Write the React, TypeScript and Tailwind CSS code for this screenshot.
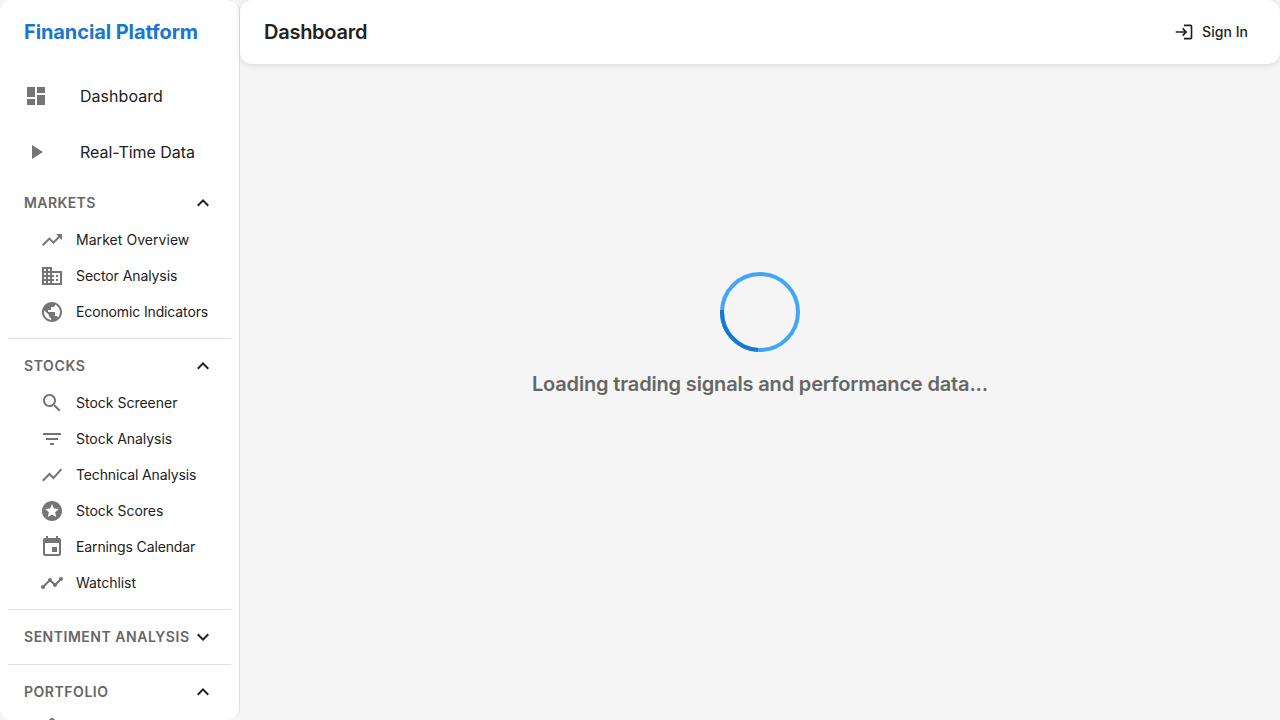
import type { ReactNode } from "react";

const ICONS = {
  dashboard: "M3 13h8V3H3v10zm0 8h8v-6H3v6zm10 0h8V11h-8v10zm0-18v6h8V3h-8z",
  play: "M8 5v14l11-7z",
  trendingUp: "m16 6 2.29 2.29-4.88 4.88-4-4L2 16.59 3.41 18l6-6 4 4 6.3-6.29L22 12V6z",
  business:
    "M12 7V3H2v18h20V7H12zM6 19H4v-2h2v2zm0-4H4v-2h2v2zm0-4H4V9h2v2zm0-4H4V5h2v2zm4 12H8v-2h2v2zm0-4H8v-2h2v2zm0-4H8V9h2v2zm0-4H8V5h2v2zm10 12h-8v-2h2v-2h-2v-2h2v-2h-2V9h8v10zm-2-8h-2v2h2v-2zm0 4h-2v2h2v-2z",
  globe:
    "M12 2C6.48 2 2 6.48 2 12s4.48 10 10 10 10-4.48 10-10S17.52 2 12 2zm-1 17.93c-3.95-.49-7-3.85-7-7.93 0-.62.08-1.21.21-1.79L9 15v1c0 1.1.9 2 2 2v1.93zm6.9-2.54c-.26-.81-1-1.39-1.9-1.39h-1v-3c0-.55-.45-1-1-1H8v-2h2c.55 0 1-.45 1-1V7h2c1.1 0 2-.9 2-2v-.41c2.93 1.19 5 4.06 5 7.41 0 2.08-.8 3.97-2.1 5.39z",
  search:
    "M15.5 14h-.79l-.28-.27C15.41 12.59 16 11.11 16 9.5 16 5.91 13.09 3 9.5 3S3 5.91 3 9.5 5.91 16 9.5 16c1.61 0 3.09-.59 4.23-1.57l.27.28v.79l5 4.99L20.49 19l-4.99-5zm-6 0C7.01 14 5 11.99 5 9.5S7.01 5 9.5 5 14 7.01 14 9.5 11.99 14 9.5 14z",
  filter: "M10 18h4v-2h-4v2zM3 6v2h18V6H3zm3 7h12v-2H6v2z",
  chart: "m3.5 18.49 6-6.01 4 4L22 6.92l-1.41-1.41-7.09 7.97-4-4L2 16.99z",
  stars:
    "M11.99 2C6.47 2 2 6.48 2 12s4.47 10 9.99 10C17.52 22 22 17.52 22 12S17.52 2 11.99 2zm4.24 16L12 15.45 7.77 18l1.12-4.81-3.73-3.23 4.92-.42L12 5l1.92 4.53 4.92.42-3.73 3.23L16.23 18z",
  event:
    "M17 12h-5v5h5v-5zM16 1v2H8V1H6v2H5c-1.11 0-1.99.9-1.99 2L3 19c0 1.1.89 2 2 2h14c1.1 0 2-.9 2-2V5c0-1.1-.9-2-2-2h-1V1h-2zm3 18H5V8h14v11z",
  timeline:
    "M23 8c0 1.1-.9 2-2 2-.18 0-.35-.02-.51-.07l-3.56 3.55c.05.16.07.34.07.52 0 1.1-.9 2-2 2s-2-.9-2-2c0-.18.02-.36.07-.52l-2.55-2.55c-.16.05-.34.07-.52.07s-.36-.02-.52-.07l-4.55 4.56c.05.16.07.33.07.51 0 1.1-.9 2-2 2s-2-.9-2-2 .9-2 2-2c.18 0 .35.02.51.07l4.56-4.55C8.02 9.36 8 9.18 8 9c0-1.1.9-2 2-2s2 .9 2 2c0 .18-.02.36-.07.52l2.55 2.55c.16-.05.34-.07.52-.07s.36.02.52.07l3.55-3.56C19.02 8.35 19 8.18 19 8c0-1.1.9-2 2-2s2 .9 2 2z",
  assignment:
    "M19 3h-4.18C14.4 1.84 13.3 1 12 1c-1.3 0-2.4.84-2.82 2H5c-1.1 0-2 .9-2 2v14c0 1.1.9 2 2 2h14c1.1 0 2-.9 2-2V5c0-1.1-.9-2-2-2zm-7 0c.55 0 1 .45 1 1s-.45 1-1 1-1-.45-1-1 .45-1 1-1zm2 14H7v-2h7v2zm3-4H7v-2h10v2zm0-4H7V7h10v2z",
  expandLess: "m12 8-6 6 1.41 1.41L12 10.83l4.59 4.58L18 14z",
  expandMore: "M16.59 8.59 12 13.17 7.41 8.59 6 10l6 6 6-6z",
  login:
    "M11 7 9.6 8.4l2.6 2.6H2v2h10.2l-2.6 2.6L11 17l5-5-5-5zm9 12h-8v2h8c1.1 0 2-.9 2-2V5c0-1.1-.9-2-2-2h-8v2h8v14z",
};

type IconName = keyof typeof ICONS;

function Icon({ name, className }: { name: IconName; className: string }) {
  return (
    <svg viewBox="0 0 24 24" fill="currentColor" className={`shrink-0 ${className}`} aria-hidden="true">
      <path d={ICONS[name]} />
    </svg>
  );
}

type Item = { icon: IconName; label: string; tracking?: string };

const topItems: Item[] = [
  { icon: "dashboard", label: "Dashboard", tracking: "tracking-[0.03px]" },
  { icon: "play", label: "Real-Time Data", tracking: "tracking-[-0.03px]" },
];

const sections: { title: string; tracking: string; open: boolean; items: Item[] }[] = [
  {
    title: "Markets",
    tracking: "tracking-[0.4px]",
    open: true,
    items: [
      { icon: "trendingUp", label: "Market Overview", tracking: "tracking-[0.05px]" },
      { icon: "business", label: "Sector Analysis", tracking: "tracking-[-0.08px]" },
      { icon: "globe", label: "Economic Indicators", tracking: "tracking-[-0.13px]" },
    ],
  },
  {
    title: "Stocks",
    tracking: "tracking-[0.6px]",
    open: true,
    items: [
      { icon: "search", label: "Stock Screener" },
      { icon: "filter", label: "Stock Analysis", tracking: "tracking-[-0.04px]" },
      { icon: "chart", label: "Technical Analysis", tracking: "tracking-[-0.13px]" },
      { icon: "stars", label: "Stock Scores" },
      { icon: "event", label: "Earnings Calendar", tracking: "tracking-[-0.12px]" },
      { icon: "timeline", label: "Watchlist", tracking: "tracking-[-0.05px]" },
    ],
  },
  { title: "Sentiment Analysis", tracking: "tracking-[0.52px]", open: false, items: [] },
  {
    title: "Portfolio",
    tracking: "tracking-[0.54px]",
    open: true,
    items: [{ icon: "assignment", label: "Portfolio" }],
  },
];

function Section({
  title,
  tracking,
  open,
  children,
}: {
  title: string;
  tracking: string;
  open: boolean;
  children: ReactNode;
}) {
  return (
    <section className="border-b border-black/12 py-2">
      <button className="flex h-[38px] w-full items-center justify-between px-4">
        <span className={`w-[167px] min-w-0 text-left text-sm font-semibold whitespace-nowrap text-[#666666] uppercase ${tracking}`}>
          {title}
        </span>
        <Icon name={open ? "expandLess" : "expandMore"} className="size-6" />
      </button>
      {children}
    </section>
  );
}

export default function App() {
  return (
    <div className="flex h-screen overflow-hidden bg-[#f5f5f5] font-['Inter',sans-serif] text-[#212121]">
      <aside className="h-screen w-60 shrink-0 overflow-hidden rounded-xl border-r border-black/12 bg-white">
        <div className="flex h-16 items-center px-6">
          <h1 className="text-xl font-bold tracking-[-0.09px] whitespace-nowrap text-[#1976d2]">Financial Platform</h1>
        </div>
        <nav className="px-2 pt-2">
          {topItems.map((item) => (
            <a key={item.label} className="mb-2 flex h-12 items-center px-4">
              <Icon name={item.icon} className="mr-8 size-6 text-[#757575]" />
              <span className={`text-base whitespace-nowrap ${item.tracking ?? ""}`}>{item.label}</span>
            </a>
          ))}
          <div className="-mt-2">
            {sections.map((section) => (
              <Section key={section.title} title={section.title} tracking={section.tracking} open={section.open}>
                {section.items.map((item) => (
                  <a key={item.label} className="flex h-9 items-center pl-8">
                    <Icon name={item.icon} className="mr-3 size-6 text-[#757575]" />
                    <span className={`text-sm whitespace-nowrap ${item.tracking ?? ""}`}>{item.label}</span>
                  </a>
                ))}
              </Section>
            ))}
          </div>
        </nav>
      </aside>
      <div className="flex min-w-0 flex-1 flex-col">
        <header className="flex h-16 shrink-0 items-center justify-between rounded-xl bg-white pr-8 pl-6 shadow-[0_1px_6px_rgba(0,0,0,0.12)]">
          <h2 className="text-xl font-semibold tracking-[-0.26px]">Dashboard</h2>
          <button className="flex items-center gap-2 text-sm font-medium tracking-[0.04px]">
            <Icon name="login" className="size-5" />
            Sign In
          </button>
        </header>
        <main className="flex flex-col items-center pt-[208px]">
          <svg viewBox="0 0 80 80" className="size-20" fill="none" strokeWidth="4">
            <circle cx="40" cy="40" r="38" stroke="#42a5f5" />
            <path d="M38 77.95A38 38 0 0 1 2.05 38" stroke="#1976d2" />
          </svg>
          <p className="mt-4 text-xl leading-8 font-semibold tracking-[-0.16px] text-[#666666]">
            Loading trading signals and performance data...
          </p>
        </main>
      </div>
    </div>
  );
}
